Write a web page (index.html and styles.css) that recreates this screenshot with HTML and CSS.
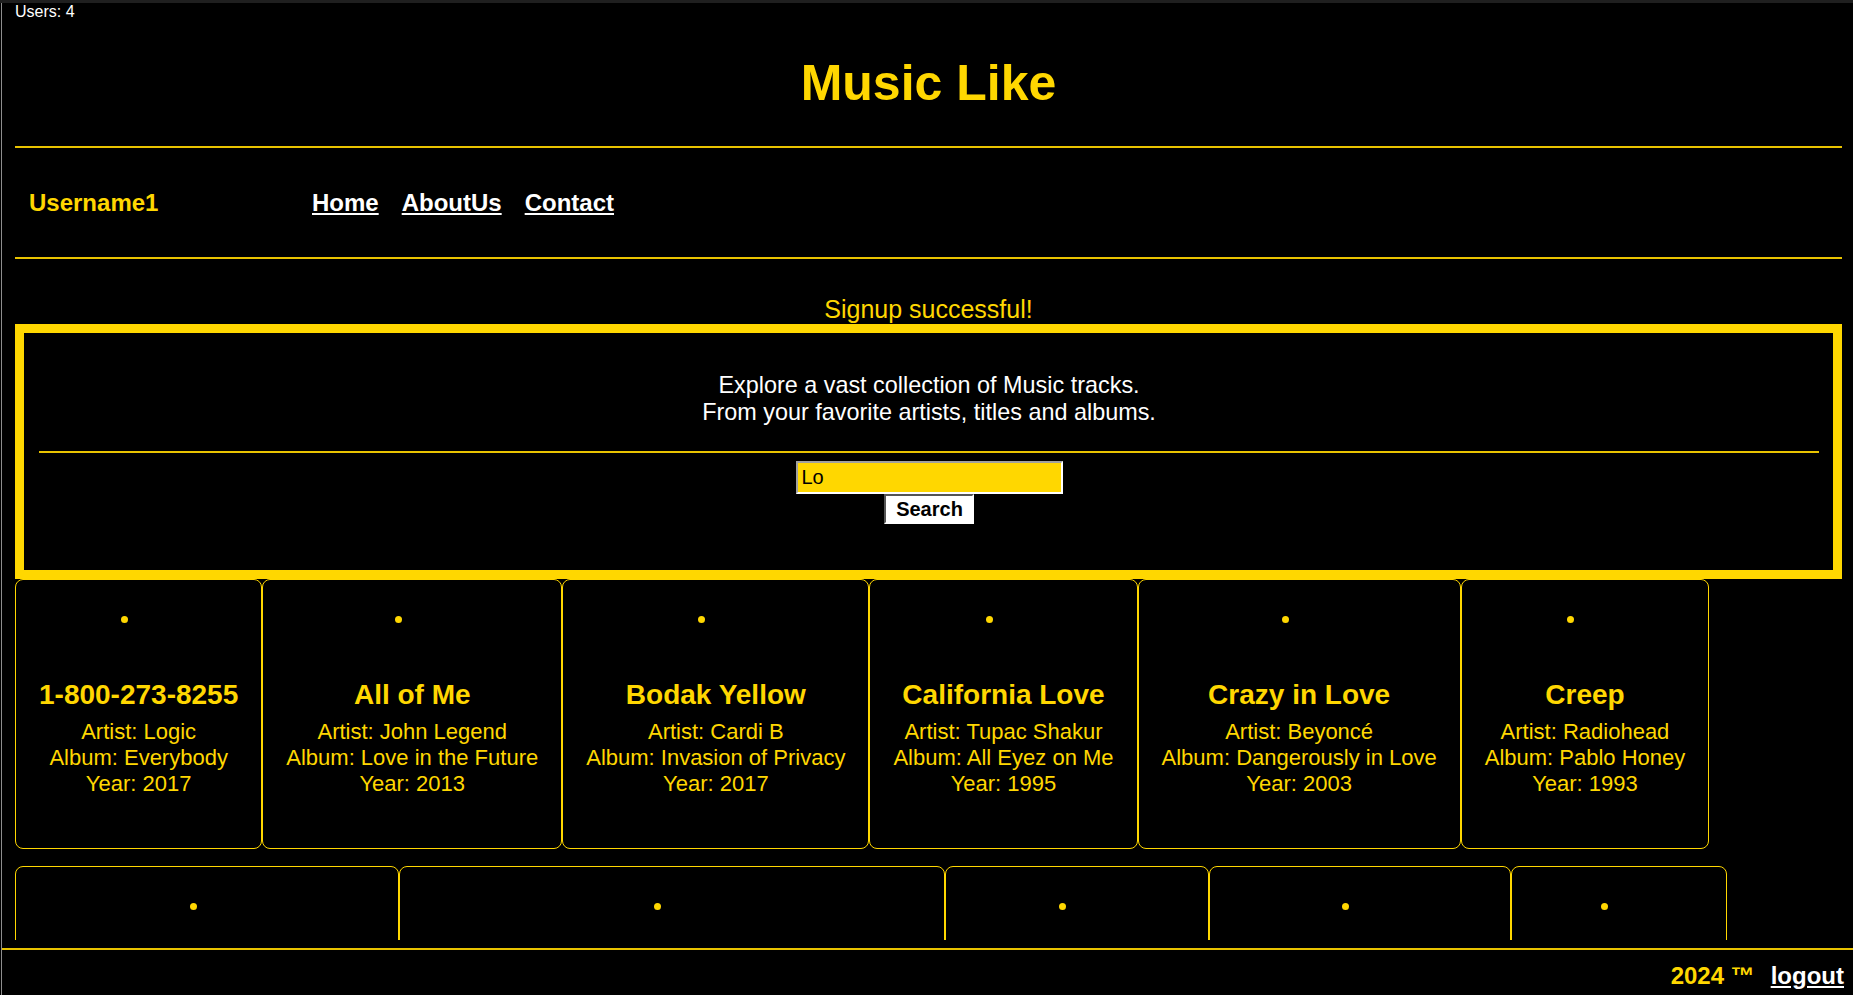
FILE: index.html
```html
<!DOCTYPE html>
<html lang="en">
<head>
<meta charset="utf-8">
<title>Music Like</title>
<link rel="stylesheet" href="styles.css">
</head>
<body>
<div class="main">
  <div class="users">Users: 4</div>
  <h1 class="site-title">Music Like</h1>
  <div class="rule"></div>
  <nav class="navbar">
    <span class="username">Username1</span>
    <div class="links">
      <a href="#" class="nav-link">Home</a>
      <a href="#" class="nav-link">AboutUs</a>
      <a href="#" class="nav-link">Contact</a>
    </div>
  </nav>
  <div class="rule"></div>
  <p class="flash">Signup successful!</p>
  <section class="hero">
    <p class="hero-text">Explore a vast collection of Music tracks.<br>From your favorite artists, titles and albums.</p>
    <div class="hero-rule"></div>
    <form class="search" onsubmit="return false">
      <input class="search-input" type="text" value="Lo">
      <button class="search-btn" type="submit">Search</button>
    </form>
  </section>
  <div class="cards">
    <div class="card">
      <div class="cover"><span class="dot"></span></div>
      <h2 class="card-title">1-800-273-8255</h2>
      <div class="card-info"><p>Artist: Logic</p><p>Album: Everybody</p><p>Year: 2017</p></div>
    </div>
    <div class="card">
      <div class="cover"><span class="dot"></span></div>
      <h2 class="card-title">All of Me</h2>
      <div class="card-info"><p>Artist: John Legend</p><p>Album: Love in the Future</p><p>Year: 2013</p></div>
    </div>
    <div class="card">
      <div class="cover"><span class="dot"></span></div>
      <h2 class="card-title">Bodak Yellow</h2>
      <div class="card-info"><p>Artist: Cardi B</p><p>Album: Invasion of Privacy</p><p>Year: 2017</p></div>
    </div>
    <div class="card">
      <div class="cover"><span class="dot"></span></div>
      <h2 class="card-title">California Love</h2>
      <div class="card-info"><p>Artist: Tupac Shakur</p><p>Album: All Eyez on Me</p><p>Year: 1995</p></div>
    </div>
    <div class="card">
      <div class="cover"><span class="dot"></span></div>
      <h2 class="card-title">Crazy in Love</h2>
      <div class="card-info"><p>Artist: Beyoncé</p><p>Album: Dangerously in Love</p><p>Year: 2003</p></div>
    </div>
    <div class="card">
      <div class="cover"><span class="dot"></span></div>
      <h2 class="card-title">Creep</h2>
      <div class="card-info"><p>Artist: Radiohead</p><p>Album: Pablo Honey</p><p>Year: 1993</p></div>
    </div>
    <div class="card">
      <div class="cover"><span class="dot"></span></div>
      <h2 class="card-title">Get Lucky</h2>
      <div class="card-info"><p>Artist: Daft Punk</p><p>Album: Random Access Memories</p><p>Year: 2013</p></div>
    </div>
    <div class="card">
      <div class="cover"><span class="dot"></span></div>
      <h2 class="card-title">I Will Always Love You</h2>
      <div class="card-info"><p>Artist: Whitney Houston</p><p>Album: The Bodyguard: Original Soundtrack Album</p><p>Year: 1992</p></div>
    </div>
    <div class="card">
      <div class="cover"><span class="dot"></span></div>
      <h2 class="card-title">LOVE.</h2>
      <div class="card-info"><p>Artist: Kendrick Lamar</p><p>Album: DAMN.</p><p>Year: 2017</p></div>
    </div>
    <div class="card">
      <div class="cover"><span class="dot"></span></div>
      <h2 class="card-title">Rolling in the Deep</h2>
      <div class="card-info"><p>Artist: Adele</p><p>Album: 21</p><p>Year: 2011</p></div>
    </div>
    <div class="card">
      <div class="cover"><span class="dot"></span></div>
      <h2 class="card-title">Wannabe</h2>
      <div class="card-info"><p>Artist: Spice Girls</p><p>Album: Spice</p><p>Year: 1996</p></div>
    </div>
  </div>
</div>
<footer class="footer">
  <div class="footer-rule"></div>
  <div class="footer-row">
    <span class="copy">2024 ™</span>
    <a href="#" class="logout">logout</a>
  </div>
</footer>
</body>
</html>
```
FILE: styles.css
```css
html {
  background: #000;
  border-top: 3px solid #1f1f1f;
}

body {
  margin: 0 0 0 1px;
  border-left: 1px solid #8e8e8e;
  height: calc(100vh - 3px);
  box-sizing: border-box;
  display: flex;
  flex-direction: column;
  background: #000;
  color: #FFD700;
  font-family: "Liberation Sans", Arial, sans-serif;
  overflow: hidden;
}

.main {
  flex: 1;
  min-height: 0;
  overflow: hidden;
  padding: 0 11px 0 13px;
}

.users {
  color: #fff;
  font-size: 16px;
  line-height: 17px;
}

.site-title {
  margin: 34px 0 0;
  text-align: center;
  font-size: 50px;
  line-height: 58px;
  font-weight: bold;
  color: #FFD700;
}

.rule {
  height: 2px;
  background: #e8c300;
  margin-top: 34px;
}

.navbar + .rule {
  margin-top: 0;
}

.navbar {
  display: flex;
  align-items: center;
  height: 109px;
  padding-left: 14px;
}

.username {
  width: 283px;
  font-size: 24px;
  font-weight: bold;
  color: #FFD700;
}

.links {
  display: flex;
  gap: 23px;
}

.nav-link {
  color: #fff;
  font-size: 24px;
  font-weight: bold;
  text-decoration: underline;
}

.flash {
  margin: 36px 0 0;
  text-align: center;
  font-size: 25px;
  line-height: 29px;
  color: #FFD700;
}

.hero {
  border: 9px solid #FFD700;
  padding: 39px 14px 46px 15px;
  text-align: center;
}

.hero-text {
  margin: 0;
  color: #fff;
  font-size: 23.4px;
  line-height: 27px;
}

.hero-rule {
  height: 2px;
  background: #e8c300;
  margin-top: 25px;
}

.search {
  display: flex;
  flex-direction: column;
  align-items: center;
  margin-top: 8px;
}

.search-input {
  box-sizing: border-box;
  width: 267px;
  height: 33px;
  margin: 0;
  padding: 1px 4px;
  border: 2px solid;
  border-color: #a0a0a0 #fff #fff #a0a0a0;
  background: #FFD700;
  color: #000;
  font-family: "Liberation Sans", Arial, sans-serif;
  font-size: 20px;
  outline: none;
}

.search-btn {
  box-sizing: border-box;
  height: 30px;
  margin: 0;
  padding: 0 9px 0 10px;
  border: 2px solid;
  border-color: #555 #fff #fff #555;
  background: #fff;
  color: #000;
  font-family: "Liberation Sans", Arial, sans-serif;
  font-size: 20px;
  font-weight: bold;
}

.cards {
  display: flex;
  flex-wrap: wrap;
  row-gap: 17px;
  align-items: stretch;
}

.card {
  border: 1px solid #FFD700;
  border-radius: 8px;
  padding: 23px;
  text-align: center;
}

.cover {
  height: 32px;
  display: flex;
  justify-content: center;
  align-items: center;
}

.dot {
  width: 7px;
  height: 7px;
  border-radius: 50%;
  background: #FFD700;
  margin-right: 28px;
}

.card-title {
  margin: 44px 0 8px;
  font-size: 28px;
  line-height: 32px;
  font-weight: bold;
  white-space: nowrap;
  color: #FFD700;
}

.card-info {
  margin-bottom: 28px;
}

.card-info p {
  margin: 0;
  font-size: 22px;
  line-height: 26px;
  white-space: nowrap;
  color: #FFD700;
}

.footer {
  flex: none;
  height: 55px;
  box-sizing: border-box;
  padding-top: 8px;
  background: #000;
}

.footer-rule {
  height: 2px;
  background: #e8c300;
}

.footer-row {
  display: flex;
  justify-content: flex-end;
  align-items: baseline;
  gap: 16px;
  margin-top: 12px;
  padding-right: 9px;
  font-size: 24px;
  line-height: 28px;
  font-weight: bold;
}

.copy {
  color: #FFD700;
}

.logout {
  color: #fff;
  text-decoration: underline;
}
```
